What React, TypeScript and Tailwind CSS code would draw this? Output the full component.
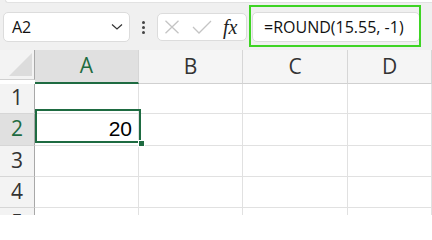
import React from 'react';

const ui = { fontFamily: '"Open Sans", "Noto Sans", sans-serif' };

function HeaderCell({ label, active }: { label: string; active?: boolean }) {
  return (
    <div
      className={
        'flex items-center justify-center border-r border-[#d6d6d6] text-[21px] ' +
        (active
          ? 'bg-[#e0e0e0] text-[#1e6b41] border-b-2 border-b-[#1e6b41]'
          : 'bg-[#f5f5f5] text-[#333] border-b border-b-[#d0d0d0]')
      }
      style={ui}
    >
      {label}
    </div>
  );
}

function RowHead({ n, active, h }: { n: number; active?: boolean; h: string }) {
  return (
    <div
      className={
        h +
        ' flex items-center justify-center border-r border-r-[#a8a8a8] border-b border-b-[#d6d6d6] text-[21px] ' +
        (active ? 'bg-[#e0e0e0] text-[#1e6b41]' : 'bg-[#f3f3f3] text-[#333]')
      }
      style={ui}
    >
      {n}
    </div>
  );
}

function Cell({ h, children }: { h: string; children?: React.ReactNode }) {
  return (
    <div className={h + ' flex items-center justify-end pr-[6px] border-r border-b border-[#e1e1e1] bg-white'}>
      {children}
    </div>
  );
}

export default function App() {
  const rows = [
    { n: 1, h: 'h-[30px]' },
    { n: 2, h: 'h-[32px]' },
    { n: 3, h: 'h-[31px]' },
    { n: 4, h: 'h-[31px]' },
    { n: 5, h: 'h-[31px]' },
  ];

  return (
    <div className="w-[432px] h-[215px] overflow-hidden bg-white">
      {/* formula bar area */}
      <div className="relative h-[50px] bg-[#f0f0f0]">
        <div className="ml-[5px] h-[3px] bg-white rounded-bl-[4px] border-b border-l border-[#e2e2e2]" />
        <div className="flex items-center pt-[9px]">
          <div className="ml-[3px] w-[127px] h-[30px] bg-white rounded-[5px] border border-[#dcdcdc] flex items-center justify-between pl-[8px] pr-[6px]">
            <span className="text-[16px] text-[#111]" style={ui}>
              A2
            </span>
            <svg width="12" height="8" viewBox="0 0 12 8">
              <path d="M1 1.5 L6 6 L11 1.5" fill="none" stroke="#333" strokeWidth="1.2" />
            </svg>
          </div>
          <div className="w-[27px] flex flex-col items-center gap-[2px]">
            <span className="w-[3px] h-[3px] bg-[#444] rounded-full" />
            <span className="w-[3px] h-[3px] bg-[#444] rounded-full" />
            <span className="w-[3px] h-[3px] bg-[#444] rounded-full" />
          </div>
          <div className="w-[90px] h-[28px] bg-white rounded-[5px] border border-[#dcdcdc] flex items-center pl-[6px]">
            <svg width="16" height="14" viewBox="0 0 16 14">
              <path d="M1.5 0.8 L14.5 13.2 M14.5 0.8 L1.5 13.2" stroke="#c4c4c4" strokeWidth="1.3" />
            </svg>
            <svg className="ml-[12px]" width="20" height="14" viewBox="0 0 20 14">
              <path d="M1 7 L7 13 L19 1" fill="none" stroke="#c4c4c4" strokeWidth="1.3" />
            </svg>
            <span
              className="ml-[11px] text-[20px] italic text-[#222] leading-none"
              style={{ fontFamily: '"Liberation Serif", serif' }}
            >
              fx
            </span>
          </div>
          <div className="ml-[5px] w-[168px] h-[30px] bg-white rounded-[5px] border border-[#dcdcdc] flex items-center pl-[11px]">
            <span className="text-[16px] text-[#111]" style={ui}>
              =ROUND(15.55, -1)
            </span>
          </div>
        </div>
        <div className="absolute left-[249px] top-[5px] w-[172px] h-[42px] border-2 border-[#3ed424]" />
      </div>

      {/* grid */}
      <div className="relative grid grid-cols-[35px_104px_104px_105px_1fr]">
        <div className="h-[30px] bg-[#f3f3f3] border-r border-r-[#a8a8a8] border-b border-b-[#d0d0d0] relative">
          <svg className="absolute left-[9px] top-[3px]" width="23" height="23" viewBox="0 0 23 23">
            <path d="M23 0 L23 23 L0 23 Z" fill="#dcdcdc" />
          </svg>
        </div>
        <HeaderCell label="A" active />
        <HeaderCell label="B" />
        <HeaderCell label="C" />
        <HeaderCell label="D" />

        {rows.map((r) => (
          <React.Fragment key={r.n}>
            <RowHead n={r.n} active={r.n === 2} h={r.h} />
            <Cell h={r.h}>
              {r.n === 2 && (
                <span className="text-[21px] text-black" style={{ fontFamily: '"Liberation Sans", Arial, sans-serif' }}>
                  20
                </span>
              )}
            </Cell>
            <Cell h={r.h} />
            <Cell h={r.h} />
            <Cell h={r.h} />
          </React.Fragment>
        ))}

        {/* selection */}
        <div className="absolute left-[35px] top-[59px] w-[106px] h-[34px] border-2 border-[#1e6b41] pointer-events-none" />
        <div className="absolute left-[138px] top-[90px] w-[5px] h-[5px] bg-[#1e6b41] border border-white box-content" />
      </div>
    </div>
  );
}
